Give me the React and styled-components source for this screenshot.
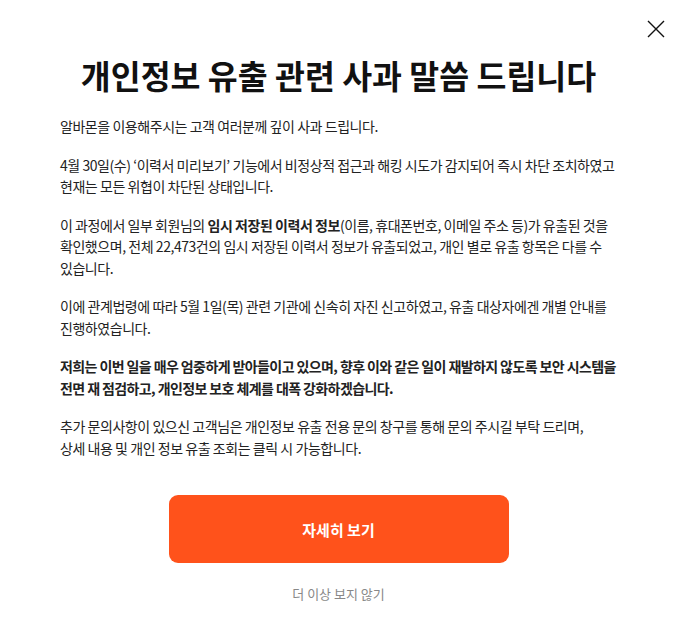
import React from "react";
import styled, { createGlobalStyle } from "styled-components";

const GlobalStyle = createGlobalStyle`
  html, body {
    margin: 0;
    padding: 0;
    background: #fff;
  }
  body {
    font-family: "Noto Sans CJK KR", "Noto Sans", sans-serif;
    color: #222;
  }
`;

const Modal = styled.div`
  position: relative;
  width: 677px;
  height: 644px;
  box-sizing: border-box;
  padding: 50px 60px 0;
  background: #fff;
`;

const CloseButton = styled.button`
  position: absolute;
  top: 19px;
  right: 11px;
  width: 20px;
  height: 20px;
  padding: 0;
  border: 0;
  background: none;
  cursor: pointer;
`;

const Title = styled.h1`
  margin: 0 0 16px;
  text-align: center;
  font-size: 32.5px;
  font-weight: 700;
  line-height: 50px;
  letter-spacing: 0;
  color: #111;
`;

const Body = styled.div`
  display: flex;
  flex-direction: column;
  gap: 17px;
`;

const Paragraph = styled.p`
  margin: 0;
  font-size: 14px;
  line-height: 21.5px;
  letter-spacing: ${(p) => (p.$strong ? "-0.6px" : "-0.45px")};
  color: #222;
  font-weight: ${(p) => (p.$strong ? 700 : 400)};
  white-space: nowrap;
`;

const Strong = styled.strong`
  font-weight: 700;
`;

const Actions = styled.div`
  display: flex;
  flex-direction: column;
  align-items: center;
  margin-top: 36px;
`;

const PrimaryButton = styled.button`
  width: 340px;
  height: 68px;
  border: 0;
  border-radius: 9px;
  background: #ff521b;
  color: #fff;
  font-family: inherit;
  font-size: 15px;
  font-weight: 700;
  cursor: pointer;
`;

const TextButton = styled.button`
  margin-top: 21px;
  border: 0;
  background: none;
  padding: 0;
  font-family: inherit;
  font-size: 13px;
  color: #888;
  cursor: pointer;
`;

export default function App() {
  return (
    <>
      <GlobalStyle />
      <Modal>
        <CloseButton aria-label="닫기">
          <svg width="20" height="20" viewBox="0 0 20 20" fill="none">
            <path d="M2 2L18 18M18 2L2 18" stroke="#111" strokeWidth="1.4" />
          </svg>
        </CloseButton>
        <Title>개인정보 유출 관련 사과 말씀 드립니다</Title>
        <Body>
          <Paragraph>알바몬을 이용해주시는 고객 여러분께 깊이 사과 드립니다.</Paragraph>
          <Paragraph>
            4월 30일(수) ‘이력서 미리보기’ 기능에서 비정상적 접근과 해킹 시도가 감지되어 즉시 차단 조치하였고
            <br />
            현재는 모든 위협이 차단된 상태입니다.
          </Paragraph>
          <Paragraph>
            이 과정에서 일부 회원님의 <Strong>임시 저장된 이력서 정보</Strong>(이름, 휴대폰번호, 이메일 주소 등)가 유출된 것을
            <br />
            확인했으며, 전체 22,473건의 임시 저장된 이력서 정보가 유출되었고, 개인 별로 유출 항목은 다를 수
            <br />
            있습니다.
          </Paragraph>
          <Paragraph>
            이에 관계법령에 따라 5월 1일(목) 관련 기관에 신속히 자진 신고하였고, 유출 대상자에겐 개별 안내를
            <br />
            진행하였습니다.
          </Paragraph>
          <Paragraph $strong>
            저희는 이번 일을 매우 엄중하게 받아들이고 있으며, 향후 이와 같은 일이 재발하지 않도록 보안 시스템을
            <br />
            전면 재 점검하고, 개인정보 보호 체계를 대폭 강화하겠습니다.
          </Paragraph>
          <Paragraph>
            추가 문의사항이 있으신 고객님은 개인정보 유출 전용 문의 창구를 통해 문의 주시길 부탁 드리며,
            <br />
            상세 내용 및 개인 정보 유출 조회는 클릭 시 가능합니다.
          </Paragraph>
        </Body>
        <Actions>
          <PrimaryButton>자세히 보기</PrimaryButton>
          <TextButton>더 이상 보지 않기</TextButton>
        </Actions>
      </Modal>
    </>
  );
}
